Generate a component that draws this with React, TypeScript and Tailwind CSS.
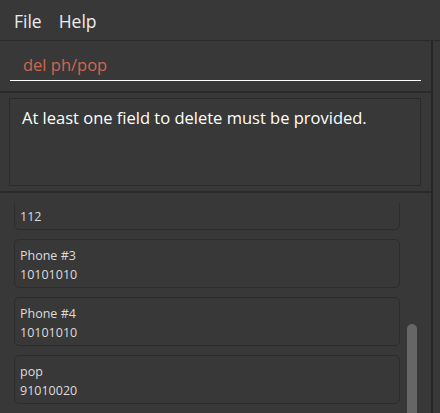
import React from "react";

const font = { fontFamily: '"Open Sans", "Noto Sans", sans-serif' };

function Card({ a, b }: { a: string; b: string }) {
  return (
    <div className="h-[49px] shrink-0 rounded-[5px] border border-[#2c2c2c] bg-[#383838] pl-[5px] pt-[6px] text-[12.5px] leading-[19px] text-[#dcdcdc]">
      <div>{a}</div>
      <div>{b}</div>
    </div>
  );
}

export default function App() {
  return (
    <div className="flex h-[413px] w-[440px] flex-col overflow-hidden bg-[#383838]" style={font}>
      <div className="flex h-[41px] shrink-0 items-center gap-[17px] border-b border-[#2a2a2a] pl-[14px] pt-[3px] text-[17.5px] text-[#ececec]">
        <span>File</span>
        <span>Help</span>
      </div>
      <div className="flex min-h-0 flex-1">
        <div className="flex w-[431px] flex-col">
          <div className="h-[50px] shrink-0 px-[10px] pt-[11px]">
            <div className="h-[28px] pl-[13px] text-[16.5px] leading-[26px] text-[#d06651]">del ph/pop</div>
            <div className="h-px w-[411px] bg-white" />
          </div>
          <div className="h-[2px] shrink-0 bg-[#2a2a2a]" />
          <div className="h-[98px] shrink-0 pl-[9px] pt-[5px]">
            <div className="h-[88px] w-[412px] border border-[#2a2a2a] pl-[12px] pt-[7px] text-[16.5px] text-white">
              At least one field to delete must be provided.
            </div>
          </div>
          <div className="h-[2px] shrink-0 bg-[#2a2a2a]" />
          <div className="relative min-h-0 flex-1 pt-[10px]">
            <div className="h-full overflow-hidden">
              <div className="-mt-[22px] flex w-[400px] flex-col gap-[9px] pl-[14px]">
                <Card a="Phone #2" b="112" />
                <Card a="Phone #3" b="10101010" />
                <Card a="Phone #4" b="10101010" />
                <Card a="pop" b="91010020" />
              </div>
            </div>
            <div className="absolute left-[407px] top-[131px] h-[120px] w-[10px] rounded-t-[5px] bg-[#666666]" />
          </div>
        </div>
        <div className="w-[2px] bg-[#262626]" />
        <div className="flex-1" />
      </div>
    </div>
  );
}
